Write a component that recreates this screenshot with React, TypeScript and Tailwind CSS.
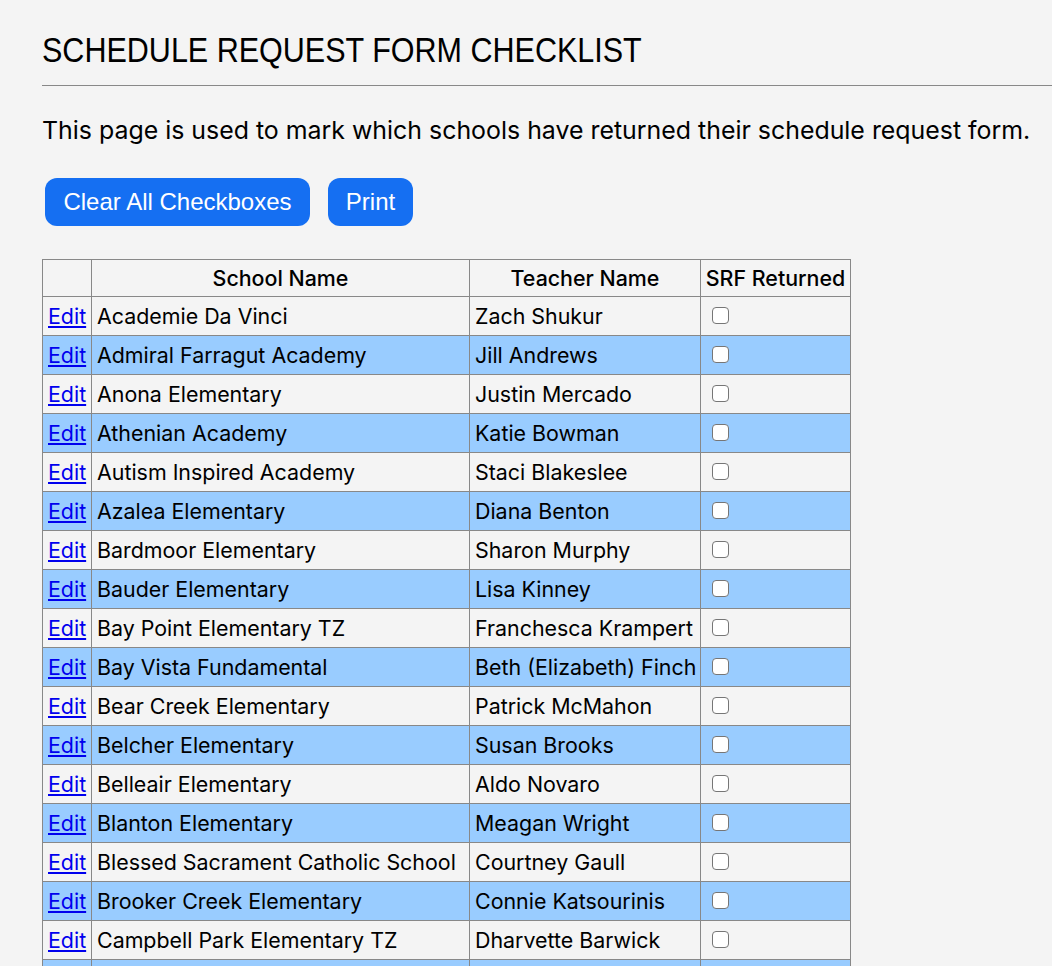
import React, { useState } from 'react';

interface Row {
  school: string;
  teacher: string;
}

const ROWS: Row[] = [
  { school: 'Academie Da Vinci', teacher: 'Zach Shukur' },
  { school: 'Admiral Farragut Academy', teacher: 'Jill Andrews' },
  { school: 'Anona Elementary', teacher: 'Justin Mercado' },
  { school: 'Athenian Academy', teacher: 'Katie Bowman' },
  { school: 'Autism Inspired Academy', teacher: 'Staci Blakeslee' },
  { school: 'Azalea Elementary', teacher: 'Diana Benton' },
  { school: 'Bardmoor Elementary', teacher: 'Sharon Murphy' },
  { school: 'Bauder Elementary', teacher: 'Lisa Kinney' },
  { school: 'Bay Point Elementary TZ', teacher: 'Franchesca Krampert' },
  { school: 'Bay Vista Fundamental', teacher: 'Beth (Elizabeth) Finch' },
  { school: 'Bear Creek Elementary', teacher: 'Patrick McMahon' },
  { school: 'Belcher Elementary', teacher: 'Susan Brooks' },
  { school: 'Belleair Elementary', teacher: 'Aldo Novaro' },
  { school: 'Blanton Elementary', teacher: 'Meagan Wright' },
  { school: 'Blessed Sacrament Catholic School', teacher: 'Courtney Gaull' },
  { school: 'Brooker Creek Elementary', teacher: 'Connie Katsourinis' },
  { school: 'Campbell Park Elementary TZ', teacher: 'Dharvette Barwick' },
  { school: 'Cross Bayou Elementary', teacher: 'Karen Ellis' },
  { school: 'Curlew Creek Elementary', teacher: 'Maria Lopez' },
];

const App: React.FC = () => {
  const [checked, setChecked] = useState<boolean[]>(ROWS.map(() => false));

  const toggle = (i: number) => {
    setChecked(prev => prev.map((v, j) => (j === i ? !v : v)));
  };

  return (
    <div className="min-h-screen bg-[#f4f4f4] pl-[42px] pt-[32px] font-['Inter','Liberation_Sans',sans-serif] text-black">
      {/* Title */}
      <h1 className="origin-left scale-x-[0.872] whitespace-nowrap text-[35px] leading-[35px] font-['Liberation_Sans',sans-serif]">
        SCHEDULE REQUEST FORM CHECKLIST
      </h1>
      <div className="mt-[18px] border-t border-[#888]" />

      <p className="mt-[32px] whitespace-nowrap text-[24.9px] leading-[25px]">
        This page is used to mark which schools have returned their schedule request form.
      </p>

      {/* Buttons */}
      <div className="mt-[35px] flex gap-[18px] pl-[3px] font-['Liberation_Sans',sans-serif]">
        <button
          onClick={() => setChecked(ROWS.map(() => false))}
          className="h-[48px] w-[265px] rounded-[12px] bg-[#156ff2] text-[24px] text-white"
        >
          Clear All Checkboxes
        </button>
        <button className="h-[48px] w-[85px] rounded-[12px] bg-[#156ff2] text-[24px] text-white">
          Print
        </button>
      </div>

      {/* Checklist table */}
      <table className="mt-[33px] w-[809px] table-fixed border-collapse text-[21.4px]">
        <colgroup>
          <col className="w-[49px]" />
          <col className="w-[378px]" />
          <col className="w-[231px]" />
          <col className="w-[150px]" />
        </colgroup>
        <thead>
          <tr className="h-[37px]">
            <th className="border border-[#888]"></th>
            <th className="border border-[#888] text-center font-medium">School Name</th>
            <th className="border border-[#888] text-center font-medium">Teacher Name</th>
            <th className="border border-[#888] text-center font-medium whitespace-nowrap">SRF Returned</th>
          </tr>
        </thead>
        <tbody>
          {ROWS.map((row, i) => (
            <tr key={row.school} className={`h-[39px] ${i % 2 === 1 ? 'bg-[#99ccff]' : 'bg-[#f4f4f4]'}`}>
              <td className="border border-[#888] px-[5px]">
                <a href="#" className="text-[#0000ee] underline">Edit</a>
              </td>
              <td className="border border-[#888] px-[5px] whitespace-nowrap">{row.school}</td>
              <td className="border border-[#888] px-[5px] whitespace-nowrap">{row.teacher}</td>
              <td className="border border-[#888] pl-[11px] align-middle">
                <input
                  type="checkbox"
                  checked={checked[i]}
                  onChange={() => toggle(i)}
                  className="block h-[17px] w-[17px] -mt-[2px] appearance-none rounded-[4px] border border-[#767676] bg-white checked:bg-[#156ff2]"
                />
              </td>
            </tr>
          ))}
        </tbody>
      </table>
    </div>
  );
};

export default App;
